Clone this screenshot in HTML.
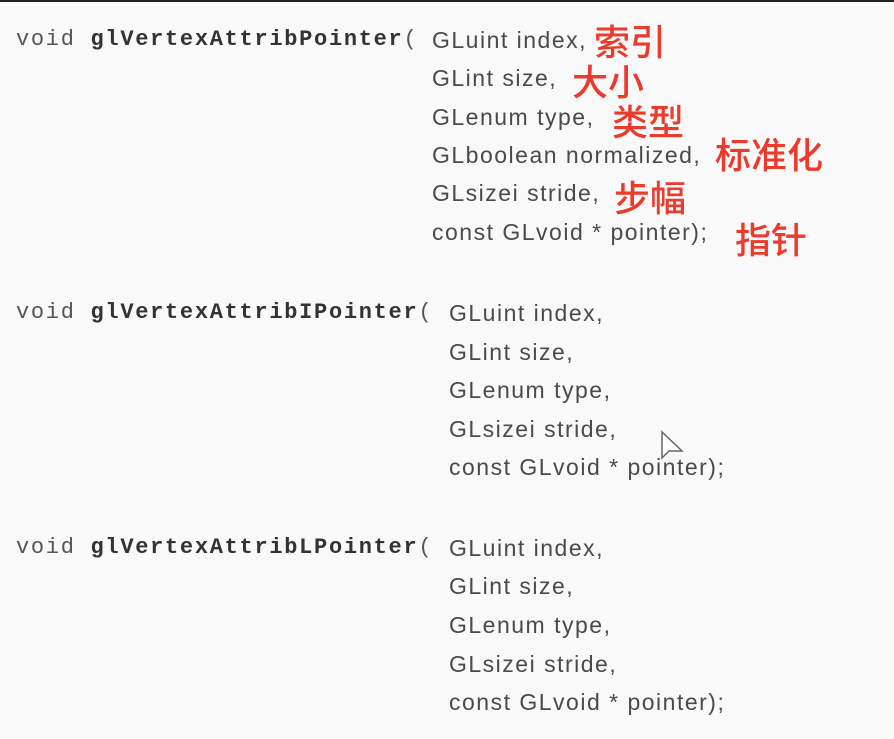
<!DOCTYPE html>
<html><head><meta charset="utf-8"><style>
html,body{margin:0;padding:0}
body{width:894px;height:739px;background:#f9f9f9;position:relative;overflow:hidden;border-top:2px solid #222;box-sizing:border-box}
.m{position:absolute;font-family:"Liberation Mono",monospace;font-size:22px;letter-spacing:1.7px;color:#555;white-space:pre;line-height:26px}
.m b{color:#333}
.p{position:absolute;font-family:"Liberation Sans",sans-serif;font-size:23px;color:#4a4a4a;white-space:pre;line-height:26px;letter-spacing:1.5px}
.r{position:absolute;font-family:"Liberation Sans","Noto Sans CJK SC",sans-serif;font-size:36px;color:#ea3b2c;line-height:40px;white-space:pre;font-weight:500}
</style></head><body>
<div class="m" style="left:16px;top:25px">void <b>glVertexAttribPointer</b>(</div>
<div class="p" style="left:432px;top:25px">GLuint index,</div>
<div class="p" style="left:432px;top:63px">GLint size,</div>
<div class="p" style="left:432px;top:102px">GLenum type,</div>
<div class="p" style="left:432px;top:140px">GLboolean normalized,</div>
<div class="p" style="left:432px;top:178px">GLsizei stride,</div>
<div class="p" style="left:432px;top:217px">const GLvoid * pointer);</div>
<div class="r" style="left:594px;top:21px">索引</div>
<div class="r" style="left:572px;top:61px">大小</div>
<div class="r" style="left:612px;top:101px">类型</div>
<div class="r" style="left:715px;top:134px">标准化</div>
<div class="r" style="left:614px;top:177px">步幅</div>
<div class="r" style="left:735px;top:219px">指针</div>

<div class="m" style="left:16px;top:298px">void <b>glVertexAttribIPointer</b>(</div>
<div class="p" style="left:449px;top:298px">GLuint index,</div>
<div class="p" style="left:449px;top:337px">GLint size,</div>
<div class="p" style="left:449px;top:375px">GLenum type,</div>
<div class="p" style="left:449px;top:414px">GLsizei stride,</div>
<div class="p" style="left:449px;top:452px">const GLvoid * pointer);</div>
<svg style="position:absolute;left:660px;top:428px" width="26" height="34"><path d="M2 2 L2 28 L9 21 L22 21 Z" fill="#fff" fill-opacity="0.6" stroke="#666" stroke-width="1.5"/></svg>

<div class="m" style="left:16px;top:533px">void <b>glVertexAttribLPointer</b>(</div>
<div class="p" style="left:449px;top:533px">GLuint index,</div>
<div class="p" style="left:449px;top:571px">GLint size,</div>
<div class="p" style="left:449px;top:610px">GLenum type,</div>
<div class="p" style="left:449px;top:649px">GLsizei stride,</div>
<div class="p" style="left:449px;top:687px">const GLvoid * pointer);</div>
</body></html>
